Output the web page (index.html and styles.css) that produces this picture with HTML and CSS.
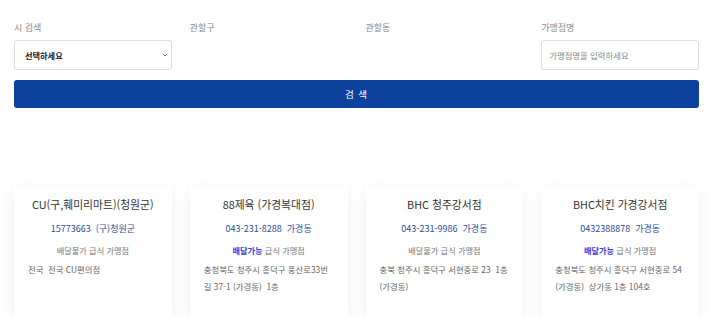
FILE: index.html
```html
<!DOCTYPE html>
<html lang="ko">
<head>
<meta charset="utf-8">
<link rel="stylesheet" href="styles.css">
</head>
<body>
<div class="page">
  <form class="search">
    <div class="fields">
      <div class="field">
        <label class="label">시 검색</label>
        <div class="select-box">
          <span class="select-text">선택하세요</span>
          <svg class="chev" width="6" height="4" viewBox="0 0 6 4"><path d="M0.8 0.8 L3 3 L5.2 0.8" fill="none" stroke="#666" stroke-width="0.9"/></svg>
        </div>
      </div>
      <div class="field">
        <label class="label">관할구</label>
      </div>
      <div class="field">
        <label class="label">관할동</label>
      </div>
      <div class="field">
        <label class="label">가맹점명</label>
        <div class="input-box"><span class="placeholder">가맹점명을 입력하세요</span></div>
      </div>
    </div>
    <div class="btn">검 색</div>
  </form>

  <div class="cards">
    <div class="card">
      <div class="title">CU(구,훼미리마트)(청원군)</div>
      <div class="phone">15773663&nbsp;&nbsp;(구)청원군</div>
      <div class="delivery">배달불가 급식 가맹점</div>
      <div class="addr">전국&nbsp;&nbsp;전국 CU편의점</div>
    </div>
    <div class="card">
      <div class="title">88제육 (가경복대점)</div>
      <div class="phone">043-231-8288&nbsp;&nbsp;가경동</div>
      <div class="delivery"><span class="ok">배달가능</span> 급식 가맹점</div>
      <div class="addr">충청북도 청주시 흥덕구 풍산로33번길 37-1 (가경동)&nbsp;&nbsp;1층</div>
    </div>
    <div class="card">
      <div class="title">BHC 청주강서점</div>
      <div class="phone">043-231-9986&nbsp;&nbsp;가경동</div>
      <div class="delivery">배달불가 급식 가맹점</div>
      <div class="addr">충북 청주시 흥덕구 서현중로 23&nbsp;&nbsp;1층 (가경동)</div>
    </div>
    <div class="card">
      <div class="title">BHC치킨 가경강서점</div>
      <div class="phone">0432388878&nbsp;&nbsp;가경동</div>
      <div class="delivery"><span class="ok">배달가능</span> 급식 가맹점</div>
      <div class="addr">충청북도 청주시 흥덕구 서현중로 54 (가경동)&nbsp;&nbsp;상가동 1층 104호</div>
    </div>
  </div>
</div>
</body>
</html>
```

FILE: styles.css
```css
* { box-sizing: border-box; }
html, body { margin: 0; padding: 0; background: #fff; }
body {
  font-family: "Noto Sans CJK KR", "Noto Sans", sans-serif;
  color: #333;
}
.page {
  padding: 22px 21px 0 14px;
}
.fields {
  display: grid;
  grid-template-columns: repeat(4, 1fr);
  column-gap: 18px;
}
.field {
  display: flex;
  flex-direction: column;
}
.label {
  font-size: 9px;
  line-height: 12px;
  color: #888;
  height: 12px;
}
.select-box, .input-box {
  margin-top: 6px;
  height: 30px;
  border: 1px solid #dcdcdc;
  border-radius: 3px;
  display: flex;
  align-items: center;
  background: #fff;
}
.select-box {
  padding: 0 3px 0 10px;
  justify-content: space-between;
}
.select-text {
  font-size: 8.2px;
  font-weight: 700;
  color: #222;
}
.chev { display: block; }
.input-box { padding: 0 7px; }
.placeholder {
  font-size: 8.4px;
  color: #888;
}
.btn {
  margin-top: 10px;
  height: 28px;
  border-radius: 3px;
  background: #0c419d;
  color: #fff;
  font-size: 9.5px;
  display: flex;
  align-items: center;
  justify-content: center;
  letter-spacing: 1px;
}
.cards {
  margin-top: 78px;
  display: grid;
  grid-template-columns: repeat(4, 1fr);
  column-gap: 18px;
}
.card {
  height: 129px;
  background: #fff;
  box-shadow: 0 5px 14px rgba(0, 0, 0, 0.07);
  padding: 8px 14px 0;
}
.title {
  text-align: center;
  font-size: 10.8px;
  line-height: 20px;
  color: #333;
  white-space: nowrap;
}
.phone {
  margin-top: 8px;
  text-align: center;
  font-size: 9px;
  line-height: 14px;
  color: #2c4d9a;
}
.delivery {
  margin-top: 7px;
  text-align: center;
  font-size: 8.2px;
  line-height: 14px;
  color: #777;
}
.ok {
  color: #3d3dd4;
  font-weight: 700;
}
.addr {
  margin-top: 4px;
  font-size: 8.4px;
  line-height: 17px;
  color: #666;
}
```
